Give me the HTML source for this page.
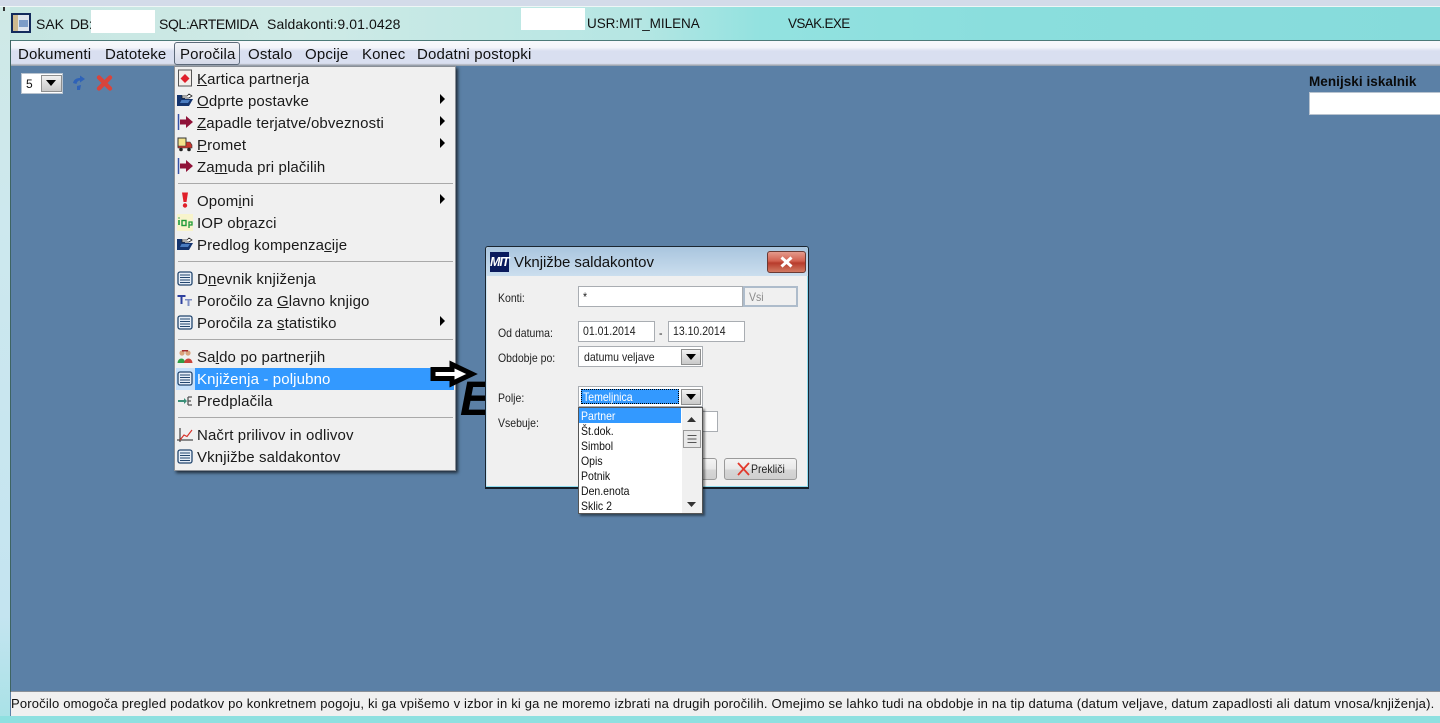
<!DOCTYPE html>
<html><head><meta charset="utf-8"><style>
html,body{margin:0;padding:0;width:1440px;height:723px;overflow:hidden;background:#5b80a6}
body{position:relative;font-family:"Liberation Sans",sans-serif;color:#111}
.a{position:absolute}
.t{position:absolute;white-space:nowrap;line-height:18px}
.m{font-size:15px;top:46px;letter-spacing:.17px}
.i{font-size:15px;left:197px;color:#1a1a1a;letter-spacing:.13px;margin-top:1px}
.s{position:absolute;left:178px;width:275px;height:1px;background:#a9a9a9}
.ar{position:absolute;left:440px;width:0;height:0;border-left:5px solid #000;border-top:5px solid transparent;border-bottom:5px solid transparent}
.l{font-size:12px;color:#222;position:absolute;white-space:nowrap;line-height:14px;transform:scaleX(.875);transform-origin:0 50%}
.f{position:absolute;background:#fff;border:1px solid #a9adb2;box-sizing:border-box;font-size:12px;line-height:14px;color:#222;white-space:nowrap}
.f span{display:inline-block;transform:scaleX(.875);transform-origin:0 50%}
.btn{position:absolute;width:17px;height:16px;background:linear-gradient(#f2f2f2,#c9c9c9);border:1px solid #8e8f8f;box-sizing:border-box}
.btn:after{content:"";position:absolute;left:4px;top:4px;border-top:6px solid #000;border-left:5.5px solid transparent;border-right:5.5px solid transparent}
.o{position:absolute;left:581px;font-size:12px;line-height:15px;color:#111;white-space:nowrap;transform:scaleX(.875);transform-origin:0 50%}
svg{position:absolute;overflow:visible}
</style></head><body>
<!-- frame -->
<div class="a" style="left:0;top:0;width:1440px;height:7px;background:#d3dbe9"></div>
<div class="a" style="left:0;top:7px;width:1440px;height:34px;background:linear-gradient(90deg,#c6e6e2 0,#cfeae6 300px,#b5e6e3 640px,#93e2e0 760px,#8adedd 1000px,#86dbdb 1440px)"></div>
<div class="a" style="left:0;top:6px;width:1440px;height:1px;background:#eef6f6"></div>
<div class="a" style="left:0;top:7px;width:10px;height:716px;background:linear-gradient(#cfe9e6,#cde8ee 30%,#c4e4f0 85%,#a8e2e6)"></div>
<div class="a" style="left:3px;top:7px;width:2px;height:4px;background:#333"></div>
<div class="a" style="left:0;top:716px;width:1440px;height:7px;background:#8ee0e0"></div>
<!-- title icon -->
<div class="a" style="left:11px;top:13px;width:20px;height:20px;background:#132a5c"></div>
<div class="a" style="left:13px;top:15px;width:16px;height:16px;background:linear-gradient(90deg,#cdb98f 0 5px,#dfe5ee 5px)"></div>
<div class="a" style="left:19px;top:20px;width:9px;height:7px;background:#7d9cc7"></div>
<div class="t" style="left:36px;top:15px;font-size:14px">SAK</div>
<div class="t" style="left:70px;top:15px;font-size:14px;letter-spacing:-.3px">DB:</div>
<div class="a" style="left:91px;top:10px;width:64px;height:23px;background:#fff"></div>
<div class="t" style="left:159px;top:15px;font-size:14px;letter-spacing:-.4px">SQL:ARTEMIDA</div>
<div class="t" style="left:267px;top:15px;font-size:14px;letter-spacing:.1px">Saldakonti:9.01.0428</div>
<div class="a" style="left:521px;top:8px;width:64px;height:22px;background:#fff"></div>
<div class="t" style="left:587px;top:15px;font-size:13.5px;letter-spacing:-.04px">USR:MIT_MILENA</div>
<div class="t" style="left:788px;top:15px;font-size:13.5px;letter-spacing:-.65px">VSAK.EXE</div>
<!-- window -->
<div class="a" style="left:10px;top:40px;width:1430px;height:1px;background:#4d7a78"></div>
<div class="a" style="left:10px;top:41px;width:1430px;height:25px;background:linear-gradient(#f8f9fc 0,#f4f5fa 26%,#d9dff0 40%,#d9dff0 90%,#b9bdc6 94%,#8d9aa8 100%)"></div>
<div class="a" style="left:10px;top:40px;width:1px;height:652px;background:#3e6462"></div>
<div class="a" style="left:174px;top:42px;width:66px;height:23px;box-sizing:border-box;border:1px solid #5d6a7a;border-radius:3px;background:linear-gradient(#f3f4f8,#d4d9e8)"></div>
<div class="t m" style="left:18px">Dokumenti</div>
<div class="t m" style="left:105px">Datoteke</div>
<div class="t m" style="left:180px">Poročila</div>
<div class="t m" style="left:248px">Ostalo</div>
<div class="t m" style="left:305px">Opcije</div>
<div class="t m" style="left:362px">Konec</div>
<div class="t m" style="left:417px">Dodatni postopki</div>
<!-- toolbar -->
<div class="a" style="left:21px;top:73px;width:42px;height:21px;background:#fff;box-sizing:border-box;border:1px solid #b8c3cf"></div>
<div class="t" style="left:26px;top:75px;font-size:12px">5</div>
<div class="btn" style="left:41px;top:75px;width:21px;height:17px;background:linear-gradient(#f0f0f0,#c8c8c8)"></div>
<svg style="left:72px;top:75px" width="14" height="16" viewBox="0 0 14 16"><path d="M1 8 C2 4 5 3 8 3 L8 0.5 L13 4 L8 7.5 L8 5.5 C6 5.5 5 7 4.5 9 Z M5 11 L9 10 L8 15 L5 15 Z" fill="#2e62b8"/></svg>
<svg style="left:96px;top:75px" width="17" height="16" viewBox="0 0 17 16"><path d="M3 2.5 L14 13.5 M14 2.5 L3 13.5" stroke="#d8443c" stroke-width="4.4" stroke-linecap="round"/></svg>
<!-- Search -->
<div class="t" style="left:1309px;top:73px;font-size:13.5px;font-weight:bold;letter-spacing:.05px;color:#0a0a0a">Menijski iskalnik</div>
<div class="a" style="left:1309px;top:92px;width:131px;height:23px;background:#fff;box-sizing:border-box;border:1px solid #b8c3cf;border-right:0"></div>
<!-- dropdown menu -->
<div class="a" style="left:174px;top:66px;width:282px;height:405px;background:#f0f0f0;box-shadow:2px 2px 3px rgba(0,0,0,.65);border:1px solid #8a8f96;box-sizing:border-box"></div>
<div class="a" style="left:176px;top:368px;width:278px;height:22px;background:#3399ff"></div>
<div class="a" style="left:176px;top:368px;width:19px;height:22px;background:#c6e0fa"></div>
<div class="t i" style="top:70px"><u>K</u>artica partnerja</div>
<div class="t i" style="top:92px"><u>O</u>dprte postavke</div>
<div class="t i" style="top:114px"><u>Z</u>apadle terjatve/obveznosti</div>
<div class="t i" style="top:136px"><u>P</u>romet</div>
<div class="t i" style="top:158px">Za<u>m</u>uda pri plačilih</div>
<div class="t i" style="top:192px">Opom<u>i</u>ni</div>
<div class="t i" style="top:214px">IOP ob<u>r</u>azci</div>
<div class="t i" style="top:236px">Predlog kompenza<u>c</u>ije</div>
<div class="t i" style="top:270px">D<u>n</u>evnik knjiženja</div>
<div class="t i" style="top:292px">Poročilo za <u>G</u>lavno knjigo</div>
<div class="t i" style="top:314px">Poročila za <u>s</u>tatistiko</div>
<div class="t i" style="top:348px">Sa<u>l</u>do po partnerjih</div>
<div class="t i" style="top:370px;color:#fff">Knjiženja - pol<u>j</u>ubno</div>
<div class="t i" style="top:392px">Predplačila</div>
<div class="t i" style="top:426px">Načrt prilivov in odlivov</div>
<div class="t i" style="top:448px">Vknjižbe saldakontov</div>
<div class="s" style="top:183px"></div><div class="s" style="top:261px"></div><div class="s" style="top:339px"></div><div class="s" style="top:417px"></div>
<div class="ar" style="top:94px"></div><div class="ar" style="top:116px"></div><div class="ar" style="top:138px"></div><div class="ar" style="top:194px"></div><div class="ar" style="top:316px"></div>
<!-- menu icons -->
<svg style="left:177px;top:69px" width="16" height="18" viewBox="0 0 16 18"><path d="M1.5 1H14.5V17H1.5Z" fill="#f3eeea" stroke="#555"/><path d="M8 5L12.5 9.5L8 14L3.5 9.5Z" fill="#e01f2a"/></svg>
<svg style="left:177px;top:93px" width="16" height="14" viewBox="0 0 16 14"><path d="M0 2H5L6 4H8V13H0Z" fill="#14346e"/><path d="M5 5V3H10L12 1L15 3L12 5H10Z" fill="#fff" stroke="#222" stroke-width=".8"/><path d="M0 13L3 6H16L12 13Z" fill="#14346e"/><path d="M3 10L4.5 7H13L11 10Z" fill="#4a7cc0"/></svg>
<svg style="left:177px;top:114px" width="16" height="16" viewBox="0 0 16 16"><path d="M1.5 0V16" stroke="#3652a8" stroke-width="1.5"/><path d="M3 5.5H9V2L16 8L9 14V10.5H3Z" fill="#8f1238"/></svg>
<svg style="left:177px;top:137px" width="16" height="15" viewBox="0 0 16 15"><path d="M1 1H9V10H1Z" fill="#f2e28a" stroke="#333"/><path d="M9 5H13L15 8V11H1V9H9Z" fill="#c8362e" stroke="#333" stroke-width=".6"/><circle cx="4" cy="12.5" r="1.8" fill="#222"/><circle cx="12" cy="12.5" r="1.8" fill="#222"/></svg>
<svg style="left:177px;top:158px" width="16" height="16" viewBox="0 0 16 16"><path d="M1.5 0V16" stroke="#3652a8" stroke-width="1.5"/><path d="M3 5.5H9V2L16 8L9 14V10.5H3Z" fill="#8f1238"/></svg>
<svg style="left:177px;top:192px" width="16" height="16" viewBox="0 0 16 16"><path d="M5 0.5H11L9.5 10H6.5Z" fill="#e0202a"/><circle cx="8" cy="13.5" r="2.2" fill="#e0202a"/></svg>
<div class="a" style="left:177px;top:214px;width:16px;height:17px;background:#f8f4cc"></div>
<svg style="left:177px;top:214px" width="16" height="17" viewBox="0 0 16 17"><path d="M2 6V11M2 3.5V4.5" stroke="#1d9b3a" stroke-width="1.6"/><rect x="5" y="6.5" width="4" height="5" fill="none" stroke="#1d9b3a" stroke-width="1.4"/><path d="M12 8H15V11H12ZM12 8V14" fill="none" stroke="#1d9b3a" stroke-width="1.3"/></svg>
<svg style="left:177px;top:237px" width="16" height="14" viewBox="0 0 16 14"><path d="M0 2H5L6 4H8V13H0Z" fill="#14346e"/><path d="M5 5V3H10L12 1L15 3L12 5H10Z" fill="#fff" stroke="#222" stroke-width=".8"/><path d="M0 13L3 6H16L12 13Z" fill="#14346e"/><path d="M3 10L4.5 7H13L11 10Z" fill="#4a7cc0"/></svg>
<svg style="left:177px;top:271px" width="16" height="15" viewBox="0 0 16 15"><rect x="1" y="1" width="14" height="13" rx="2" fill="#e6eef8" stroke="#23466e" stroke-width="1.3"/><path d="M3 4H13M3 6.5H13M3 9H13M3 11.5H13" stroke="#23466e"/></svg>
<svg style="left:177px;top:293px" width="16" height="15" viewBox="0 0 16 15"><path d="M0.5 2H8.5V4H5.5V11H3.5V4H0.5Z" fill="#2d3f9e"/><path d="M8 6H15V7.5H12.5V13H10.5V7.5H8Z" fill="#7f8fc4"/></svg>
<svg style="left:177px;top:315px" width="16" height="15" viewBox="0 0 16 15"><rect x="1" y="1" width="14" height="13" rx="2" fill="#e6eef8" stroke="#23466e" stroke-width="1.3"/><path d="M3 4H13M3 6.5H13M3 9H13M3 11.5H13" stroke="#23466e"/></svg>
<svg style="left:177px;top:349px" width="16" height="15" viewBox="0 0 16 15"><circle cx="5" cy="4" r="2.6" fill="#d9a37c"/><circle cx="11" cy="4" r="2.6" fill="#d9a37c"/><path d="M5 1H11V2.5H5Z" fill="#a52b2b"/><path d="M0.5 14C1 8 8 8 8 14Z" fill="#2f9e44"/><path d="M7 14C8 8 15 8 15.5 14Z" fill="#c8443a"/></svg>
<svg style="left:177px;top:371px" width="16" height="15" viewBox="0 0 16 15"><rect x="1" y="1" width="14" height="13" rx="2" fill="#e6eef8" stroke="#23466e" stroke-width="1.3"/><path d="M3 4H13M3 6.5H13M3 9H13M3 11.5H13" stroke="#23466e"/></svg>
<svg style="left:178px;top:395px" width="15" height="12" viewBox="0 0 15 12"><path d="M0 5H6V3L9 6L6 9V7H0Z" fill="#3b8f78"/><path d="M10 2H14M10 6H13M10 10H14M10 2V10" stroke="#555" stroke-width="1.3" fill="none"/></svg>
<svg style="left:177px;top:427px" width="16" height="16" viewBox="0 0 16 16"><path d="M3 1V15M0 13H16" stroke="#222" fill="none"/><path d="M3 13L7 8L10 9.5L15 3" stroke="#d8342c" stroke-width="1.2" fill="none"/></svg>
<svg style="left:177px;top:449px" width="16" height="15" viewBox="0 0 16 15"><rect x="1" y="1" width="14" height="13" rx="2" fill="#e6eef8" stroke="#23466e" stroke-width="1.3"/><path d="M3 4H13M3 6.5H13M3 9H13M3 11.5H13" stroke="#23466e"/></svg>
<!-- arrow + E behind the dialog -->
<div class="t" style="left:460px;top:376px;font-size:48px;line-height:48px;font-weight:bold;font-style:italic;color:#000">E</div>
<svg style="left:430px;top:361px" width="50" height="28" viewBox="0 0 50 28"><path d="M3 8.5H22V3.5L42 13L22 22.5V17.5H3Z" fill="#fff" stroke="#000" stroke-width="5"/></svg>
<!-- dialog -->
<div class="a" style="left:485px;top:246px;width:324px;height:243px;background:#f0f0f0;box-sizing:border-box;border:1px solid #1a2530;border-bottom:2px solid #15202a;border-radius:3px 3px 0 0;box-shadow:inset -1px -1px 0 #8fdcef,inset 1px 0 0 #cfe6f2"></div>
<div class="a" style="left:486px;top:247px;width:322px;height:29px;background:linear-gradient(#a9c5de,#cbdeee);border-radius:3px 3px 0 0"></div>
<div class="a" style="left:490px;top:252px;width:19px;height:20px;background:#0a1a5c"></div>
<div class="t" style="left:490px;top:252px;width:19px;font-size:12.5px;line-height:20px;font-weight:bold;font-style:italic;color:#fff;letter-spacing:-1px">MIT</div>
<div class="t" style="left:514px;top:254px;font-size:15px;letter-spacing:-.05px">Vknjižbe saldakontov</div>
<div class="a" style="left:767px;top:251px;width:39px;height:22px;box-sizing:border-box;border:1px solid #6b3a34;border-radius:3px;background:linear-gradient(#e49a8c 0,#d2604f 45%,#b83c2c 55%,#d27a62 100%)"></div>
<svg style="left:779px;top:256px" width="15" height="12" viewBox="0 0 15 12"><path d="M2.5 1.5L12.5 10.5M12.5 1.5L2.5 10.5" stroke="#fff" stroke-width="3"/></svg>
<div class="l" style="left:498px;top:291px">Konti:</div>
<div class="f" style="left:578px;top:286px;width:165px;height:21px;padding:3px 0 0 4px"><span>*</span></div>
<div class="f" style="left:743px;top:286px;width:55px;height:21px;padding:2px 0 0 4px;background:#f0f0f0;border:2px solid #aebccb;color:#8a8a8a"><span>Vsi</span></div>
<div class="l" style="left:498px;top:326px">Od datuma:</div>
<div class="f" style="left:578px;top:321px;width:77px;height:21px;padding:2px 0 0 4px"><span>01.01.2014</span></div>
<div class="l" style="left:659px;top:326px">-</div>
<div class="f" style="left:668px;top:321px;width:77px;height:21px;padding:2px 0 0 4px"><span>13.10.2014</span></div>
<div class="l" style="left:498px;top:351px">Obdobje po:</div>
<div class="f" style="left:578px;top:346px;width:125px;height:21px;padding:3px 0 0 5px"><span>datumu veljave</span></div>
<div class="btn" style="left:681px;top:349px;width:20px;height:16px"></div>
<div class="l" style="left:498px;top:391px">Polje:</div>
<div class="l" style="left:498px;top:416px">Vsebuje:</div>
<div class="f" style="left:700px;top:411px;width:18px;height:21px;border-left:0"></div>
<div class="a" style="left:640px;top:458px;width:77px;height:22px;box-sizing:border-box;border:1px solid #9a9a9a;border-radius:3px;background:linear-gradient(#f4f4f4 0,#e8e8e8 50%,#d6d6d6 55%,#cfcfcf)"></div>
<div class="a" style="left:724px;top:458px;width:73px;height:22px;box-sizing:border-box;border:1px solid #9a9a9a;border-radius:3px;background:linear-gradient(#f4f4f4 0,#e8e8e8 50%,#d6d6d6 55%,#cfcfcf)"></div>
<svg style="left:737px;top:462px" width="13" height="14" viewBox="0 0 13 14"><path d="M1 1L12 13M12 1L1 13" stroke="#e2392c" stroke-width="1.8"/></svg>
<div class="l" style="left:751px;top:462px">Prekliči</div>
<!-- combo open -->
<div class="f" style="left:578px;top:386px;width:125px;height:21px"></div>
<div class="a" style="left:581px;top:389px;width:98px;height:15px;background:#3399ff;outline:1px dotted #000;outline-offset:-1px"></div>
<div class="l" style="left:583px;top:390px;color:#fff">Temeljnica</div>
<div class="btn" style="left:681px;top:389px;width:20px;height:16px"></div>
<div class="a" style="left:578px;top:407px;width:125px;height:107px;background:#fff;box-sizing:border-box;border:1px solid #555;box-shadow:2px 2px 2px rgba(0,0,0,.45)"></div>
<div class="a" style="left:579px;top:408px;width:102px;height:15px;background:#3399ff"></div>
<div class="a" style="left:682px;top:408px;width:20px;height:105px;background:#f0f0f0"></div>
<div class="o" style="top:409px;color:#fff">Partner</div>
<div class="o" style="top:424px">Št.dok.</div>
<div class="o" style="top:439px">Simbol</div>
<div class="o" style="top:454px">Opis</div>
<div class="o" style="top:469px">Potnik</div>
<div class="o" style="top:484px">Den.enota</div>
<div class="o" style="top:499px">Sklic 2</div>
<svg style="left:682px;top:408px" width="20" height="105" viewBox="0 0 20 105"><path d="M5 14L9.5 9L14 14Z" fill="#333"/><path d="M5 94L14 94L9.5 99Z" fill="#333"/><rect x="1.5" y="22.5" width="17" height="17" fill="#e8e8e8" stroke="#999"/><path d="M5.5 27.5H14.5M5.5 31H14.5M5.5 34.5H14.5" stroke="#555"/></svg>
<!-- status -->
<div class="a" style="left:11px;top:691px;width:1429px;height:25px;background:#f0f0f0;border-top:1px solid #8a9098;box-sizing:border-box"></div>
<div class="t" style="left:11px;top:695px;font-size:13px;color:#111;letter-spacing:.18px">Poročilo omogoča pregled podatkov po konkretnem pogoju, ki ga vpišemo v izbor in ki ga ne moremo izbrati na drugih poročilih. Omejimo se lahko tudi na obdobje in na tip datuma (datum veljave, datum zapadlosti ali datum vnosa/knjiženja).</div>
</body></html>
